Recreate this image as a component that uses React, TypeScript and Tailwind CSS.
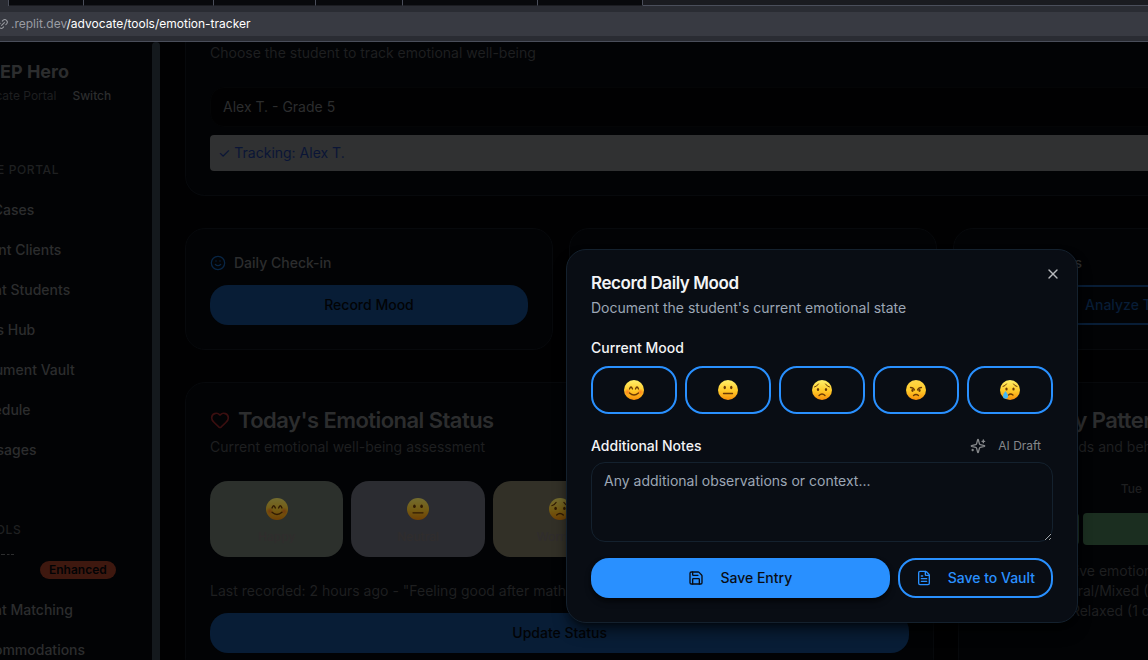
import React from "react";
import { FileText, Heart, Link2, Save, Smile, TrendingUp, X } from "lucide-react";

type Mood = "happy" | "neutral" | "worried" | "angry" | "sad";

function MoodFace({ mood, className }: { mood: Mood; className: string }) {
  const ink = "#6b3a05";
  return (
    <svg viewBox="0 0 40 40" className={className} fill="none" stroke={ink} strokeWidth="2" strokeLinecap="round" aria-hidden="true">
      <defs>
        <linearGradient id={"face-" + mood} x1="0" y1="0" x2="0" y2="1">
          <stop offset="0" stopColor={mood === "angry" ? "#ffd84a" : "#fff06a"} />
          <stop offset="0.55" stopColor="#ffc928" />
          <stop offset="1" stopColor="#f78f0a" />
        </linearGradient>
        <radialGradient id="blush">
          <stop offset="0" stopColor="#ff6a1a" stopOpacity="0.75" />
          <stop offset="1" stopColor="#ff6a1a" stopOpacity="0" />
        </radialGradient>
      </defs>
      <circle cx="20" cy="20" r="20" fill={"url(#face-" + mood + ")"} stroke="none" />
      {mood === "happy" && (
        <>
          <circle cx="7" cy="24" r="7" fill="url(#blush)" stroke="none" />
          <circle cx="33" cy="24" r="7" fill="url(#blush)" stroke="none" />
          <path d="M11 18q3-8 6 0M23 18q3-8 6 0" strokeWidth="2.600" />
          <path d="M11 26q9 8 18 0" strokeWidth="2.600" />
        </>
      )}
      {mood === "neutral" && (
        <>
          <ellipse cx="13.500" cy="15" rx="2.400" ry="3.400" fill={ink} stroke="none" />
          <ellipse cx="26.500" cy="15" rx="2.400" ry="3.400" fill={ink} stroke="none" />
          <path d="M11 27h18" strokeWidth="2.600" />
        </>
      )}
      {mood === "worried" && (
        <>
          <path d="M5 14q5-1 8-6M35 14q-5-1-8-6" />
          <ellipse cx="12" cy="19" rx="2.300" ry="3" fill={ink} stroke="none" />
          <ellipse cx="28" cy="19" rx="2.300" ry="3" fill={ink} stroke="none" />
          <path d="M14 31q6-6 12 0" strokeWidth="2.600" />
        </>
      )}
      {mood === "angry" && (
        <>
          <path d="M9 15q6 0 8 5M31 15q-6 0-8 5" strokeWidth="2.600" />
          <ellipse cx="13" cy="21" rx="2.300" ry="2.800" fill={ink} stroke="none" />
          <ellipse cx="27" cy="21" rx="2.300" ry="2.800" fill={ink} stroke="none" />
          <path d="M15 31q5-4 10 0" strokeWidth="2.600" />
        </>
      )}
      {mood === "sad" && (
        <>
          <path d="M6 13q5-1 7-5M34 13q-5-1-7-5" />
          <ellipse cx="13" cy="18" rx="2.300" ry="3" fill={ink} stroke="none" />
          <ellipse cx="27" cy="18" rx="2.300" ry="3" fill={ink} stroke="none" />
          <path d="M17 30q4-4 9 0" strokeWidth="2.600" />
          <path d="M11 22c3 4 5 7 5 10.500a5 5 0 0 1-10 0c0-3.500 2-6.500 5-10.500z" fill="#45b8f5" stroke="none" />
        </>
      )}
    </svg>
  );
}

function SparkleIcon() {
  return (
    <svg viewBox="0 0 24 24" className="size-4" fill="none" stroke="currentColor" strokeWidth="2" strokeLinecap="round" strokeLinejoin="round" aria-hidden="true">
      <path d="M9.937 15.500A2 2 0 0 0 8.500 14.063l-6.135-1.582a.5.5 0 0 1 0-.962L8.500 9.936A2 2 0 0 0 9.937 8.500l1.582-6.135a.5.5 0 0 1 .963 0L14.063 8.500A2 2 0 0 0 15.500 9.937l6.135 1.581a.5.5 0 0 1 0 .964L15.500 14.063a2 2 0 0 0-1.437 1.437l-1.582 6.135a.5.5 0 0 1-.963 0z" />
      <path d="M20 3v4M22 5h-4M4 17v2M5 18H3" />
    </svg>
  );
}

const portalLinks = ["My Cases", "Parent Clients", "Client Students", "Tools Hub", "Document Vault", "Schedule", "Messages"];
const moods: { mood: Mood; label: string }[] = [
  { mood: "happy", label: "Happy" },
  { mood: "neutral", label: "Neutral" },
  { mood: "worried", label: "Worried" },
  { mood: "angry", label: "Angry" },
  { mood: "sad", label: "Sad" },
];
const tileColors = ["bg-[#2c302c]", "bg-[#2b2c31]", "bg-[#323027]", "bg-[#302a2a]", "bg-[#2a2c32]"];

function BrowserBar() {
  return (
    <header className="shrink-0 border-b border-[#4a4e5a] bg-[#2a2c33]">
      <div className="flex h-[6px] bg-[#08090c]">
        <div className="w-[9px] border-r border-[#4a4e5a] bg-[#2a2c33]" />
        <div className="w-[75px] border-r border-b border-r-[#4a4e5a] border-b-[#1b1c21]" />
        <div className="w-[130px] border-r border-b border-r-[#4a4e5a] border-b-[#1b1c21]" />
        <div className="w-[102px] border-r border-b border-r-[#4a4e5a] border-b-[#1b1c21]" />
        <div className="w-[87px] border-r border-b border-r-[#4a4e5a] border-b-[#1b1c21]" />
        <div className="w-[135px] border-r border-b border-r-[#4a4e5a] border-b-[#1b1c21]" />
        <div className="w-[105px] border-r border-b border-r-[#4a4e5a] border-b-[#1b1c21]" />
        <div className="flex-1 border-b border-[#4a4e5a] bg-[#1a1b20]" />
      </div>
      <div className="mt-[6px] mb-[5px] flex h-6 items-center gap-[2px] bg-[#383a42] text-xs text-[#9a9ca2]">
        <Link2 className="-ml-[3px] size-3 -rotate-45" strokeWidth={2} />
        <p>
          .replit.dev<span className="text-white">/advocate/tools/emotion-tracker</span>
        </p>
      </div>
    </header>
  );
}

function Sidebar() {
  return (
    <aside className="flex w-40 shrink-0 overflow-hidden bg-[#020305] text-[#2c2d2e]">
      <div className="-ml-[65px] flex w-[217px] shrink-0 flex-col">
        <p className="pt-4 pl-[60px] text-lg font-bold">IEP Hero</p>
        <div className="flex items-center gap-4 pl-[31px] text-xs leading-5">
          <span className="text-[#1e1f20]">Advocate Portal</span>
          <button type="button" className="font-medium">Switch</button>
        </div>
        <h2 className="mt-[54px] text-xs leading-5 font-medium tracking-wider text-[#1f2021]">ADVOCATE PORTAL</h2>
        <nav className="mt-[10px] flex flex-col pl-[33px] text-sm font-medium">
          {portalLinks.map((label) => (
            <a key={label} href="#" className="flex h-10 items-center">{label}</a>
          ))}
        </nav>
        <h2 className="mt-[50px] text-xs leading-5 font-medium tracking-wider text-[#1f2021]">BASIC TOOLS</h2>
        <nav className="mt-[10px] flex flex-col pl-[33px] text-sm font-medium">
          <a href="#" className="flex h-10 items-center gap-[25px]">
            <svg viewBox="0 0 47 34" className="h-[34px] w-[47px]" stroke="#2c2d2e" aria-hidden="true">
              <path d="M33 1.500h4M39 1.500h2.500M43 1.500h3" />
            </svg>
            <span className="rounded-full bg-[#3e180f] px-[9px] text-xs leading-[18px] font-semibold text-[#020305]">Enhanced</span>
          </a>
          <a href="#" className="flex h-10 items-center">Client Matching</a>
          <a href="#" className="flex h-10 items-center">Accommodations</a>
        </nav>
      </div>
      <div className="w-2 shrink-0 rounded-t-full bg-[#14191d]" />
    </aside>
  );
}

const card = "rounded-[20px] border border-[#07090c] bg-[#020305] px-6";

function Page() {
  return (
    <main className="min-w-0 flex-1 overflow-hidden bg-[#010102] text-sm text-[#1e1f20]">
      <div className="flex min-w-[1186px] flex-col gap-8 px-[25px]">
        <section className={card + " rounded-t-none border-t-0 pb-6"}>
          <p className="pt-px">Choose the student to track emotional well-being</p>
          <button type="button" className="mt-6 flex h-10 w-full items-center rounded-[14px] border border-[#040506] bg-[#010102] px-3 text-[#2c2d2e]">
            Alex T. - Grade 5
          </button>
          <p className="mt-2 rounded-sm bg-[#303132] p-2 text-[#0a1536]">✓ Tracking: Alex T.</p>
        </section>

        <div className="grid grid-cols-3 gap-4">
          <section className={card + " py-6"}>
            <h3 className="flex items-center gap-2 font-medium text-[#2c2d2e]">
              <Smile className="size-4 text-[#082544]" />
              Daily Check-in
            </h3>
            <button type="button" className="mt-3 h-10 w-full rounded-[18px] bg-[#081d36] font-medium text-[#020305]">Record Mood</button>
          </section>
          <section className={card + " py-6"} />
          <section className={card + " py-6"}>
            <h3 className="flex items-center gap-2 font-medium text-[#2c2d2e]">
              <TrendingUp className="size-4 text-[#082544]" />
              Mood Shifts
            </h3>
            <button type="button" className="mt-3 h-10 w-full rounded-[18px] border-2 border-[#081d36] font-medium text-[#081d36]">Analyze Trends</button>
          </section>
        </div>

        <div className="grid grid-cols-3 gap-6">
          <section className={card + " col-span-2 py-6"}>
            <h2 className="flex items-center gap-2 text-[22px] leading-[26px] font-semibold tracking-tight text-[#2c2d2e]">
              <Heart className="size-5 text-[#3a0f10]" />
              Today's Emotional Status
            </h2>
            <p className="mt-1">Current emotional well-being assessment</p>
            <div className="mt-6 grid grid-cols-5 gap-2">
              {moods.map(({ mood, label }, i) => (
                <div key={mood} className={"flex flex-col items-center rounded-[18px] p-3 " + tileColors[i]}>
                  <div className="flex h-8 items-center">
                    <MoodFace mood={mood} className="size-[22px] brightness-[0.45]" />
                  </div>
                  <p className="mt-1 text-xs font-medium text-[#302d2d]">{label}</p>
                </div>
              ))}
            </div>
            <p className="mt-6">Last recorded: 2 hours ago - "Feeling good after math class"</p>
            <button type="button" className="mt-3 h-10 w-full rounded-[18px] bg-[#081d36] font-medium text-[#020305]">Update Status</button>
          </section>

          <section className={card + " py-6"}>
            <h2 className="flex items-center gap-2 text-[22px] leading-[26px] font-semibold tracking-tight text-[#2c2d2e]">
              <TrendingUp className="size-5 text-[#082544]" />
              Weekly Patterns
            </h2>
            <p className="mt-1 whitespace-nowrap">Emotional trends and behaviors</p>
            <div className="mt-6 flex gap-1 text-center text-xs font-medium">
              {["Mon", "Tue", "Wed"].map((day) => (
                <div key={day} className="w-24 shrink-0">
                  <p>{day}</p>
                  <div className="mt-4 h-8 rounded-sm bg-[#1b2e20]" />
                </div>
              ))}
            </div>
            <ul className="mt-4">
              <li>• Green: Positive emotions (4 days)</li>
              <li>• Yellow: Neutral/Mixed (1 day)</li>
              <li>• Blue: Calm/Relaxed (1 day)</li>
            </ul>
          </section>
        </div>
      </div>
    </main>
  );
}

function MoodDialog() {
  return (
    <div role="dialog" aria-labelledby="dialog-title" className="absolute top-[249px] right-[70px] flex w-[512px] flex-col gap-4 rounded-[20px] border border-[#14212e] bg-[#090d14] p-6 text-sm text-[#f3f4f6] shadow-lg shadow-black/60">
      <div>
        <h2 id="dialog-title" className="text-[17px] leading-[18px] font-semibold tracking-tight">Record Daily Mood</h2>
        <p className="mt-[6px] text-[#9ca6b5]">Document the student's current emotional state</p>
      </div>
      <button type="button" aria-label="Close" className="absolute top-4 right-4 text-[#b6b8bb]">
        <X className="size-4" />
      </button>
      <fieldset>
        <legend className="pt-1 leading-5 font-medium">Current Mood</legend>
        <div className="mt-2 grid grid-cols-5 gap-2">
          {moods.map(({ mood, label }) => (
            <button key={mood} type="button" aria-label={label} className="flex h-12 items-center justify-center rounded-[18px] border-2 border-[#2990ff]">
              <MoodFace mood={mood} className="size-5" />
            </button>
          ))}
        </div>
      </fieldset>
      <div>
        <div className="flex h-8 items-center justify-between">
          <label htmlFor="notes" className="font-medium">Additional Notes</label>
          <button type="button" className="flex items-center gap-3 px-3 text-xs text-[#85878a]">
            <SparkleIcon />
            AI Draft
          </button>
        </div>
        <textarea id="notes" placeholder="Any additional observations or context..." className="block h-20 w-full resize-y rounded-[14px] border border-[#14212e] bg-transparent px-3 py-2 placeholder:text-[#9ca6b5]" />
      </div>
      <div className="flex gap-2">
        <button type="button" className="flex h-10 flex-1 items-center justify-center gap-4 rounded-[18px] bg-[#2990ff] font-medium text-[#090d14] shadow-md shadow-black/60">
          <Save className="size-4" />
          Save Entry
        </button>
        <button type="button" className="flex h-10 items-center gap-4 rounded-[18px] border-2 border-[#2990ff] px-4 font-medium text-[#2990ff]">
          <FileText className="size-4" />
          Save to Vault
        </button>
      </div>
    </div>
  );
}

export default function App() {
  return (
    <div className="relative flex h-screen flex-col overflow-hidden bg-[#010102] font-['Inter',sans-serif]">
      <BrowserBar />
      <div className="flex min-h-0 flex-1">
        <Sidebar />
        <Page />
      </div>
      <MoodDialog />
    </div>
  );
}
